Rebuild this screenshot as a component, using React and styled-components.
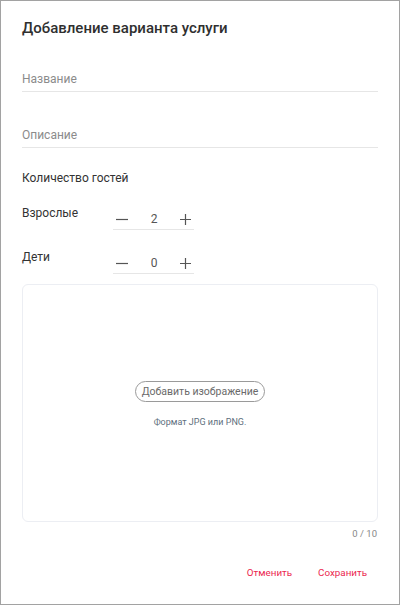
import styled, {createGlobalStyle} from "styled-components";
import {useState} from "react";

const GlobalStyle = createGlobalStyle`
  html, body {
    margin: 0;
    padding: 0;
    background: #fff;
  }
  * {
    box-sizing: border-box;
  }
`;

const Dialog = styled.div`
  width: 400px;
  height: 605px;
  border: 1px solid #a2a2a2;
  background: #fff;
  padding: 18px 21px 0;
  display: flex;
  flex-direction: column;
  font-family: Roboto, "Noto Sans", sans-serif;
  color: #333;
`;

const Title = styled.h2`
  margin: 0;
  font-size: 15px;
  line-height: 18px;
  font-weight: 500;
  color: #2f2f2f;
`;

const Field = styled.div`
  margin-top: ${p => p.$top}px;
  padding-bottom: 4px;
  border-bottom: 1px solid #e6e6e6;
`;

const Input = styled.input`
  display: block;
  width: 100%;
  border: none;
  outline: none;
  padding: 0;
  font-family: inherit;
  font-size: 12px;
  line-height: 16px;
  height: 16px;
  color: #333;

  &::placeholder {
    color: #8b8b8b;
  }
`;

const Section = styled.div`
  margin-top: 22px;
  font-size: 12px;
  line-height: 16px;
  color: #333;
`;

const GuestRow = styled.div`
  display: flex;
  align-items: flex-start;
  margin-top: 19px;
`;

const GuestLabel = styled.div`
  width: 91px;
  font-size: 12px;
  line-height: 16px;
  color: #333;
`;

const Stepper = styled.div`
  width: 81px;
  height: 22px;
  margin-top: 3px;
  padding: 0 3px 0 3px;
  display: flex;
  align-items: center;
  justify-content: space-between;
  border-bottom: 1px solid #e6e6e6;
`;

const StepButton = styled.button`
  border: none;
  background: none;
  padding: 0;
  display: flex;
  align-items: center;
  cursor: pointer;
  color: #555;
`;

const Value = styled.span`
  font-size: 12px;
  color: #555;
`;

const Dropzone = styled.div`
  margin-top: 10px;
  height: 238px;
  border: 1px solid #eceef3;
  border-radius: 6px;
  display: flex;
  flex-direction: column;
  align-items: center;
  gap: 15px;
  padding-top: 96px;
`;

const PillButton = styled.button`
  height: 21px;
  padding: 0 6px;
  border: 1px solid #9a9a9a;
  border-radius: 11px;
  background: #fff;
  font-family: inherit;
  font-size: 10.5px;
  color: #6a6a6a;
  cursor: pointer;
`;

const Hint = styled.div`
  font-size: 9px;
  line-height: 11px;
  color: #5e6f7d;
`;

const Counter = styled.div`
  margin-top: 6px;
  text-align: right;
  font-size: 9.5px;
  line-height: 12px;
  color: #888;
  margin-right: 1px;
`;

const Actions = styled.div`
  margin-top: 23px;
  display: flex;
  justify-content: flex-end;
  gap: 2px;
  margin-right: -1px;
`;

const TextButton = styled.button`
  border: none;
  background: none;
  padding: 4px 12px;
  font-family: inherit;
  font-size: 9.8px;
  line-height: 12px;
  color: #eb1f4f;
  cursor: pointer;
`;

function Minus() {
    return (
        <svg width="12" height="12" viewBox="0 0 12 12">
            <path d="M0 6.5h12" stroke="#555" strokeWidth="1.2"/>
        </svg>
    );
}

function Plus() {
    return (
        <svg width="11" height="12" viewBox="0 0 11 12">
            <path d="M0 6.5h11M5.5 1v11" stroke="#555" strokeWidth="1.2"/>
        </svg>
    );
}

function GuestStepper({value, onChange}) {
    return (
        <Stepper>
            <StepButton onClick={() => onChange(Math.max(0, value - 1))}><Minus/></StepButton>
            <Value>{value}</Value>
            <StepButton onClick={() => onChange(value + 1)}><Plus/></StepButton>
        </Stepper>
    );
}

export default function App() {
    const [adults, setAdults] = useState(2);
    const [kids, setKids] = useState(0);

    return (
        <>
            <GlobalStyle/>
            <Dialog>
                <Title>Добавление варианта услуги</Title>
                <Field $top={34}>
                    <Input placeholder="Название"/>
                </Field>
                <Field $top={35}>
                    <Input placeholder="Описание"/>
                </Field>
                <Section>Количество гостей</Section>
                <GuestRow>
                    <GuestLabel>Взрослые</GuestLabel>
                    <GuestStepper value={adults} onChange={setAdults}/>
                </GuestRow>
                <GuestRow>
                    <GuestLabel>Дети</GuestLabel>
                    <GuestStepper value={kids} onChange={setKids}/>
                </GuestRow>
                <Dropzone>
                    <PillButton>Добавить изображение</PillButton>
                    <Hint>Формат JPG или PNG.</Hint>
                </Dropzone>
                <Counter>0 / 10</Counter>
                <Actions>
                    <TextButton>Отменить</TextButton>
                    <TextButton>Сохранить</TextButton>
                </Actions>
            </Dialog>
        </>
    );
}
